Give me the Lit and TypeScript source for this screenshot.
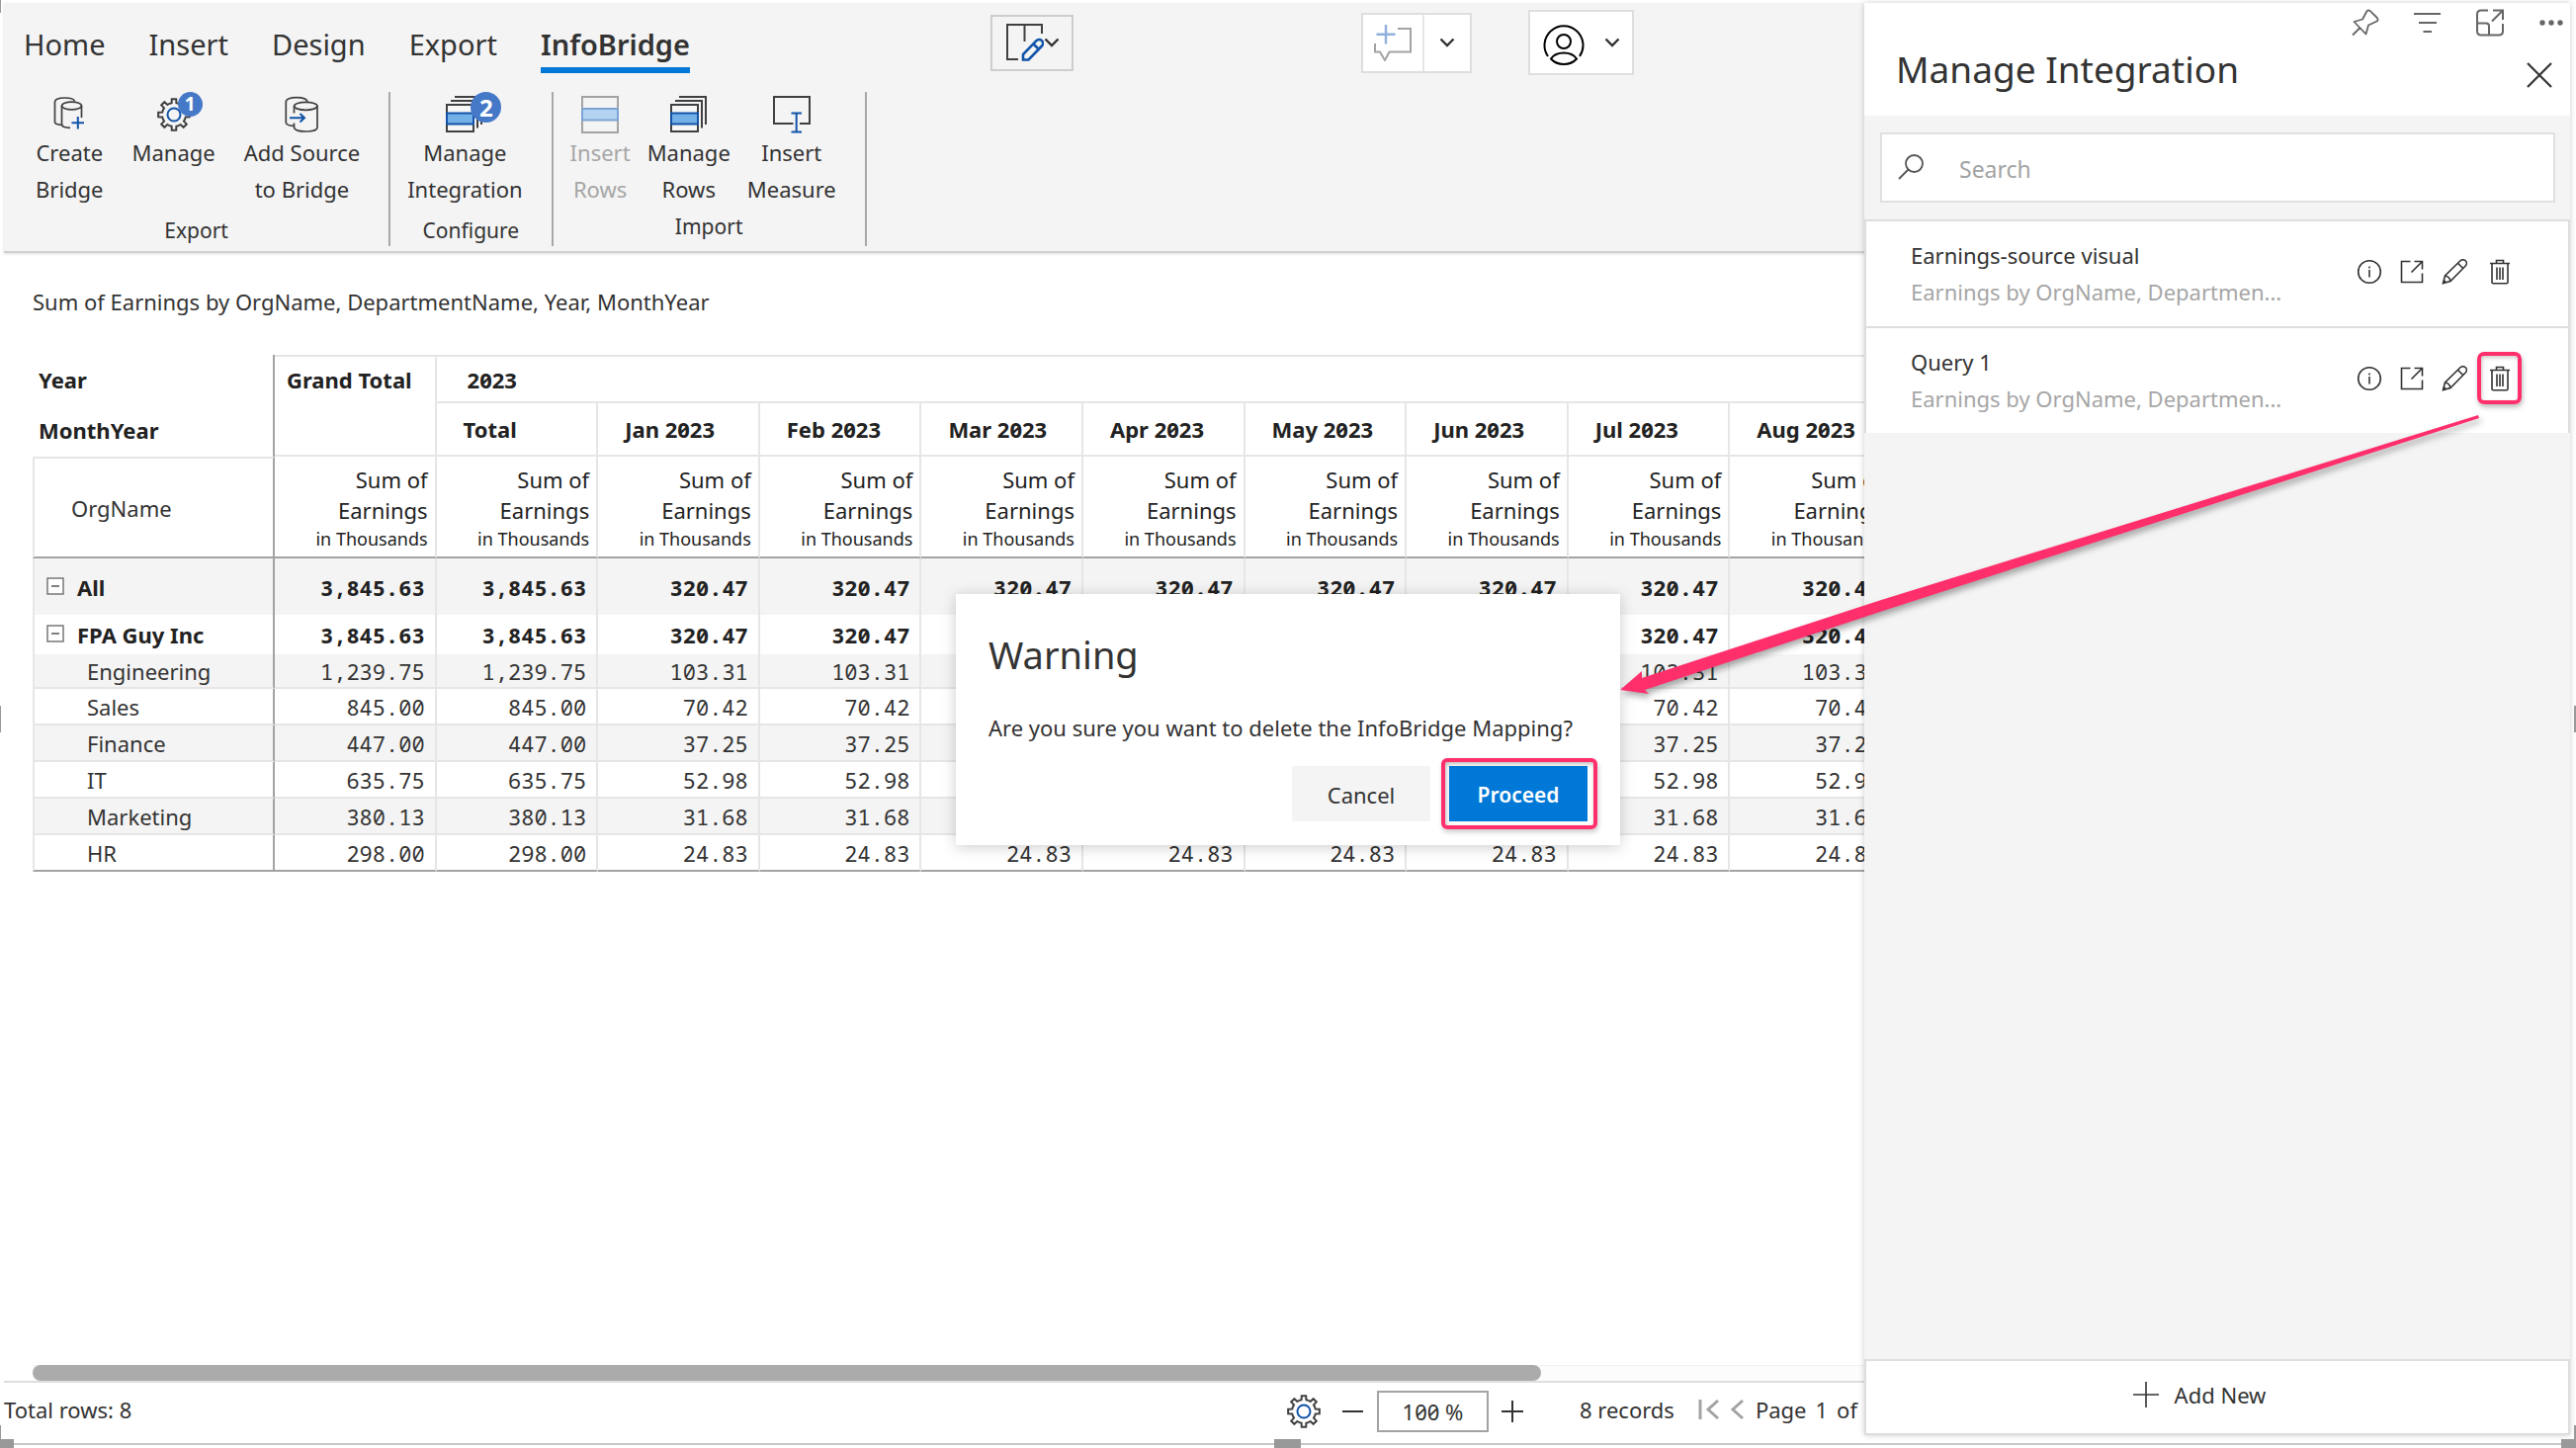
import { LitElement, html, svg, css } from 'lit';
import { customElement, property } from 'lit/decorators.js';
import { classMap } from 'lit/directives/class-map.js';

const DARK = '#404040';
const BLUE = '#1253a8';

/* Outline of an eight-toothed gear centred on (cx, cy). */
function gearPath(cx: number, cy: number, outer: number, root: number): string {
  const parts: string[] = [];
  const at = (r: number, a: number) => `${(cx + r * Math.sin(a)).toFixed(2)} ${(cy - r * Math.cos(a)).toFixed(2)}`;
  for (let i = 0; i < 8; i++) {
    const a = (i * Math.PI) / 4;
    parts.push(
      `${i ? `A${root} ${root} 0 0 1` : 'M'}${at(root, a - 0.2)}`,
      `L${at(outer, a - 0.14)}`,
      `L${at(outer, a + 0.14)}`,
      `L${at(root, a + 0.2)}`,
    );
  }
  return `${parts.join(' ')} A${root} ${root} 0 0 1 ${at(root, -0.2)} Z`;
}

const icons: Record<string, unknown> = {
  create: svg`<g fill="none" stroke=${DARK} stroke-width="1.7">
    <path d="M11 29.3C7 29 4.5 28 4.5 26.5V6C4.5 3.5 9 2 14.5 2S24 3.5 24.5 5.5"/>
    <ellipse cx="21.5" cy="10" rx="10" ry="3.8"/>
    <path d="M11.5 10V28.5C11.5 31 15 32.3 20 32.3M31.5 10V22"/></g>
    <path d="M27.8 21V33.5M21.5 27.3H34" stroke=${BLUE} stroke-width="2"/>`,
  gear: svg`<path d=${gearPath(19, 19, 16, 12)} fill="none" stroke=${DARK} stroke-width="2"/>
    <circle cx="19" cy="19" r="6.5" fill="none" stroke=${BLUE} stroke-width="2"/>`,
  source: svg`<g fill="none" stroke=${DARK} stroke-width="1.7">
    <path d="M11 30.5C6 30 3.3 29 3.3 27V6C3.3 3.2 8 1.7 14 1.7S24.5 3.2 25 6"/>
    <ellipse cx="23.3" cy="10.3" rx="11.7" ry="4"/>
    <path d="M11.5 10V17.5M11.5 27.5V32C12 34.5 17 36 23.3 36S35 34.5 35 32V10"/></g>
    <path d="M7 22.3H22M17.5 18L22 22.3L17.5 26.5" fill="none" stroke=${BLUE} stroke-width="2"/>`,
  stack: svg`<g fill="none" stroke=${DARK} stroke-width="2">
    <path d="M5 5H32V32.5M9 1H36V29"/>
    <rect x="1" y="9" width="27" height="27" fill="#f7f7f7"/></g>
    <rect x="1" y="17.5" width="27" height="11" fill="#74b0e8" stroke=${BLUE} stroke-width="2"/>`,
  rows: svg`<rect x="1" y="1" width="36" height="36" fill="none" stroke="#a3a3a3" stroke-width="2"/>
    <rect x="1" y="13" width="36" height="11.5" fill="#b3d3f0" stroke="#7da3d3" stroke-width="2"/>`,
  measure: svg`<path d="M20.5 28H1V1H37V28H27" fill="none" stroke=${DARK} stroke-width="2"/>
    <path d="M18.5 17.5H29M18.5 36.5H29M23.7 17.5V36.5" stroke=${BLUE} stroke-width="2" fill="none"/>`,
  layout: svg`<path d="M12 36H1V1H36V10M18.5 1V18" fill="none" stroke=${DARK} stroke-width="2"/>
    <path d="M17 36.5V31L30.5 17.2A3.7 3.7 0 0 1 36 22.5L22.5 36.5ZM27.5 20.5L32.5 25.5" fill="none" stroke=${BLUE} stroke-width="2.6"/>`,
  comment: svg`<path d="M1 20V28.5H6L11 37L15.5 28.5H37V5H24" fill="none" stroke="#a3a3a3" stroke-width="2"/>
    <path d="M12 1V20.5M2.5 10.7H21.5" stroke="#8fb0dc" stroke-width="2.4"/>`,
  user: svg`<g fill="none" stroke="#000" stroke-width="2"><path d="M5 33A19.5 19.5 0 1 1 37 33"/>
    <circle cx="21" cy="18" r="7"/>
    <path d="M8 35.5C11 31 15.5 29.5 21 29.5S31 31 34 35.5C30.5 39.5 26 41 21 41S11.5 39.5 8 35.5Z"/></g>`,
};

const chevron = html`<svg class="chev" width="16" height="10" viewBox="0 0 16 10">
  <path d="M1.5 1.5L8 8L14.5 1.5" fill="none" stroke="#333" stroke-width="2.4"/></svg>`;

const glyph = (name: string) =>
  html`<svg width="38" height="38" viewBox="0 0 38 38" aria-hidden="true">${icons[name]}</svg>`;

@customElement('ribbon-bar')
class RibbonBar extends LitElement {
  static styles = css`
    :host { display: block; background: #f4f4f4; border-bottom: 2px solid #d0d0d0; box-shadow: 0 1px 3px #0002; color: #333; }
    button { border: 0; background: none; padding: 0; margin: 0; font: inherit; color: inherit; }
    svg { display: block; }
    .head { display: grid; grid-template-columns: 998fr 375fr 169fr 340fr; height: 80px; align-items: center; }
    .tabs { display: flex; gap: 44px; padding: 22px 0 9px 20px; font-size: 29px; line-height: 40px; }
    .tab { border-bottom: 6px solid transparent; padding-bottom: 3px; }
    .tab.on { border-color: #0078d7; font-weight: 600; }
    .tool { display: inline-flex; align-items: center; justify-self: start; box-sizing: border-box; border: 2px solid #dedede; background: #fff; }
    .tool.layout { height: 57px; border-color: #cdcdcd; background: #f4f4f4; padding: 0 12px 0 14px; }
    .tool.comment { height: 61px; }
    .part { height: 57px; display: flex; align-items: center; justify-content: center; padding: 0 11px; }
    .part + .part { border-left: 2px solid #e6e6e6; padding: 0 15px; }
    .tool.user { height: 66px; padding: 0 12px 0 13px; gap: 20px; }
    .face { padding-top: 5px; }
    .groups { display: flex; padding: 10px 0 5px; }
    .group { box-sizing: border-box; height: 156px; padding-top: 4px; border-right: 2px solid #a8a8a8; text-align: center; }
    .items { display: flex; gap: 29px; align-items: start; padding: 0 29px 0 32px; font-size: 22px; line-height: 37px; min-height: 113px; }
    .configure .items { padding: 0 29px 0 17px; }
    .import .items { gap: 17px; padding: 0 29px 0 17px; }
    .item { display: flex; flex-direction: column; align-items: center; gap: 1px; }
    .item:disabled { color: #a6a6a6; }
    .pic { position: relative; }
    .badge { position: absolute; left: 23px; top: -4px; width: 25px; height: 25px; border-radius: 50%; background: #4678c8; color: #fff; font-weight: 700; font-size: 19px; line-height: 25px; text-align: center; }
    .badge.big { left: 25px; width: 31px; height: 31px; font-size: 24px; line-height: 31px; }
    .name { font-size: 21px; line-height: 30px; margin-top: 8px; }
    .import .name { margin-top: 4px; }
  `;

  private item(icon: string, lines: string[], badge = '', off = false) {
    return html`<button class="item" ?disabled=${off}>
      <span class="pic">${glyph(icon)}${badge
        ? html`<span class=${classMap({ badge: true, big: badge === '2' })}>${badge}</span>` : ''}</span>
      <span>${lines.map((l, i) => html`${i ? html`<br>` : ''}${l}`)}</span>
    </button>`;
  }

  render() {
    return html`
      <div class="head">
        <nav class="tabs">${['Home', 'Insert', 'Design', 'Export', 'InfoBridge'].map(
          (t) => html`<button class=${classMap({ tab: true, on: t === 'InfoBridge' })}>${t}</button>`)}</nav>
        <button class="tool layout" aria-label="Layout">${glyph('layout')}${chevron}</button>
        <div class="tool comment">
          <button class="part" aria-label="Add comment" disabled>${glyph('comment')}</button>
          <button class="part" aria-label="Comment options">${chevron}</button>
        </div>
        <button class="tool user" aria-label="Account">
          <svg class="face" width="42" height="43" viewBox="0 0 42 43">${icons.user}</svg>${chevron}
        </button>
      </div>
      <div class="groups">
        <section class="group">
          <div class="items">
            ${this.item('create', ['Create', 'Bridge'])}
            ${this.item('gear', ['Manage'], '1')}
            ${this.item('source', ['Add Source', 'to Bridge'])}
          </div>
          <div class="name">Export</div>
        </section>
        <section class="group configure">
          <div class="items">${this.item('stack', ['Manage', 'Integration'], '2')}</div>
          <div class="name">Configure</div>
        </section>
        <section class="group import">
          <div class="items">
            ${this.item('rows', ['Insert', 'Rows'], '', true)}
            ${this.item('stack', ['Manage', 'Rows'])}
            ${this.item('measure', ['Insert', 'Measure'])}
          </div>
          <div class="name">Import</div>
        </section>
      </div>`;
  }
}

interface Row { name: string; total: string; month: string; kind: string; }

const rows: Row[] = [
  { name: 'All', total: '3,845.63', month: '320.47', kind: 'all' },
  { name: 'FPA Guy Inc', total: '3,845.63', month: '320.47', kind: 'company' },
  { name: 'Engineering', total: '1,239.75', month: '103.31', kind: 'dept first' },
  { name: 'Sales', total: '845.00', month: '70.42', kind: 'dept' },
  { name: 'Finance', total: '447.00', month: '37.25', kind: 'dept' },
  { name: 'IT', total: '635.75', month: '52.98', kind: 'dept' },
  { name: 'Marketing', total: '380.13', month: '31.68', kind: 'dept' },
  { name: 'HR', total: '298.00', month: '24.83', kind: 'dept last' },
];
const months = ['Jan', 'Feb', 'Mar', 'Apr', 'May', 'Jun', 'Jul', 'Aug'];

@customElement('earnings-matrix')
class EarningsMatrix extends LitElement {
  static styles = css`
    :host { display: block; overflow: hidden; color: #222; font-size: 22px; line-height: 30px; }
    table { table-layout: fixed; width: 1881px; border-collapse: separate; border-spacing: 0; }
    .c0 { width: 245px; }
    th, td { box-sizing: border-box; padding: 0; border: 0 solid #e6e6e6; vertical-align: middle; white-space: nowrap; }
    th { text-align: left; font-feature-settings: 'zero'; }
    .y th { height: 49px; }
    .m th { height: 54px; }
    .s th { height: 103px; font-weight: 400; border-bottom: 2px solid #a3a3a3; }
    .corner { padding-left: 6px; border-right: 2px solid #a3a3a3; }
    .grand { vertical-align: top; border-width: 2px 2px 2px 0; padding: 8px 0 0 12px; }
    .year { border-width: 2px 2px 2px 0; padding-left: 31px; }
    .month { border-width: 0 2px 2px 0; padding-left: 27px; }
    .s .org { padding-left: 37px; border-top-width: 2px; border-left-width: 2px; border-right: 2px solid #a3a3a3; color: #333; }
    .s .measure { text-align: right; line-height: 31px; padding: 4px 7px 0 0; border-right-width: 2px; }
    .unit { display: block; font-size: 18px; line-height: 27px; }
    .name { text-align: left; font-weight: inherit; border-left-width: 2px; border-right: 2px solid #a3a3a3; }
    td { font-family: 'Noto Sans Mono', 'DejaVu Sans Mono', monospace; text-align: right; padding-right: 10px; border-right-width: 2px; }
    .all td { height: 57px; }
    .company td { height: 40px; }
    .dept td { height: 37px; }
    .first td { height: 35px; }
    .all, .company { font-weight: 700; }
    .dept { color: #333; font-weight: 400; }
    .dept .name { padding-left: 53px; }
    .dept > * { border-bottom-width: 2px; }
    .last > * { border-bottom: 2px solid #a3a3a3; }
    tbody tr:nth-child(odd) { background: #f4f4f4; }
    .node { display: flex; align-items: center; gap: 13px; padding-left: 12px; }
    .toggle { border: 0; background: none; padding: 0; margin: 0; display: block; }
    .toggle svg { display: block; }
  `;

  private label(r: Row) {
    if (r.kind.startsWith('dept')) return r.name;
    return html`<span class="node"><button class="toggle" aria-label="Collapse">
      <svg width="18" height="22" viewBox="0 0 18 22"><rect x="1" y="2" width="16" height="16" fill="#fff" stroke="#777" stroke-width="1.5"/>
      <path d="M5 10H13" stroke="#555" stroke-width="1.5"/></svg></button>${r.name}</span>`;
  }

  render() {
    const cols = months.length + 2;
    return html`<table>
      <colgroup><col class="c0">${Array.from({ length: cols }, () => html`<col>`)}</colgroup>
      <thead>
        <tr class="y"><th class="corner">Year</th><th class="grand" rowspan="2">Grand Total</th><th class="year" colspan=${cols - 1}>2023</th></tr>
        <tr class="m"><th class="corner">MonthYear</th><th class="month">Total</th>${months.map((m) => html`<th class="month">${m} 2023</th>`)}</tr>
        <tr class="s"><th class="org">OrgName</th>${Array.from({ length: cols }, () =>
          html`<th class="measure">Sum of<br>Earnings<span class="unit">in Thousands</span></th>`)}</tr>
      </thead>
      <tbody>${rows.map((r) => html`<tr class=${r.kind}><th class="name" scope="row">${this.label(r)}</th>
        <td>${r.total}</td><td>${r.total}</td>${months.map(() => html`<td>${r.month}</td>`)}</tr>`)}</tbody>
    </table>`;
  }
}

@customElement('status-bar')
class StatusBar extends LitElement {
  static styles = css`
    :host { display: block; color: #333; font-size: 22px; }
    button { border: 0; background: none; padding: 0; margin: 0; font: inherit; color: inherit; display: block; }
    svg { display: block; }
    .track { display: grid; grid-template-columns: 28fr 6fr; height: 16px; margin-left: 29px; background: #fcfcfc; box-shadow: inset 0 1px #f0f0f0; }
    .thumb { border-radius: 8px; background: #ababab; }
    .bar { display: flex; align-items: center; height: 59px; border-top: 2px solid #dedede; box-sizing: border-box; padding: 1px 7px 0 0; }
    .rows { flex: 1; padding-bottom: 5px; }
    .zoom { display: flex; align-items: center; gap: 13px; margin-right: 57px; }
    .gear { margin-right: 7px; }
    input { box-sizing: border-box; width: 113px; height: 42px; border: 2px solid #a3a3a3; background: #fff; font: inherit; color: inherit; text-align: center; font-feature-settings: 'zero'; padding: 0; margin: 0; }
    .pager { display: flex; align-items: center; gap: 12px; padding-bottom: 5px; }
    .records { margin-right: 12px; }
    .page { display: flex; gap: 9px; }
  `;

  render() {
    return html`
      <div class="track"><div class="thumb"></div></div>
      <div class="bar">
        <span class="rows">Total rows: 8</span>
        <div class="zoom">
          <button class="gear" aria-label="Settings">${glyph('gear')}</button>
          <button aria-label="Zoom out"><svg width="22" height="22"><path d="M0 11H21" stroke="#333" stroke-width="2"/></svg></button>
          <input aria-label="Zoom level" value="100 %">
          <button aria-label="Zoom in"><svg width="22" height="22"><path d="M0 11H22M11 0V22" stroke="#333" stroke-width="2"/></svg></button>
        </div>
        <div class="pager">
          <span class="records">8 records</span>
          <button aria-label="First page"><svg width="21" height="22"><path d="M2 1V21M20 2L10 11L20 20" fill="none" stroke="#a3a3a3" stroke-width="3"/></svg></button>
          <button aria-label="Previous page"><svg width="13" height="22"><path d="M12 2L2 11L12 20" fill="none" stroke="#a3a3a3" stroke-width="3"/></svg></button>
          <span class="page"><span>Page</span><span>1</span><span>of</span></span>
        </div>
      </div>`;
  }
}

const line = (w: number, h: number, body: unknown) =>
  html`<svg width=${w} height=${h} viewBox="0 0 ${w} ${h}" fill="none" stroke="#333" stroke-width="1.6">${body}</svg>`;

const infoIcon = line(26, 26, svg`<circle cx="13" cy="13" r="11.3"/><path d="M13 11V18.5M13 7.5V9.5"/>`);
const openIcon = line(24, 24, svg`<path d="M10.5 1.5H1.5V22.5H22.5V13.5M14.5 1.5H22.5V9.5M22.5 1.5L11.5 12.5"/>`);
const pencilIcon = line(26, 26, svg`<path d="M1.5 24.5L3.5 17L19 1.8A3.5 3.5 0 0 1 24.2 7L9 22.5ZM3.5 17C6.5 17.5 8.5 19.5 9 22.5M16.5 4.3L21.7 9.5M1.5 24.5L4 22"/>`);
const trashIcon = line(22, 26, svg`<path d="M1 4.5H21M7.5 4.5V1.5H14.5V4.5M3 4.5V23.5Q3 24.8 4.3 24.8H17.7Q19 24.8 19 23.5V4.5M8 8.5V21M11 8.5V21M14 8.5V21"/>`);

@customElement('integration-panel')
class IntegrationPanel extends LitElement {
  static styles = css`
    :host { display: flex; flex-direction: column; background: #f4f4f4; color: #333; font-size: 22px; position: relative; box-shadow: 0 0 6px #0003; }
    button { border: 0; background: none; padding: 0; margin: 0; font: inherit; color: inherit; display: block; }
    svg { display: block; }
    header { background: #fff; height: 114px; box-sizing: border-box; }
    .host { display: flex; justify-content: flex-end; align-items: center; gap: 35px; height: 40px; padding-right: 6px; }
    .title { display: flex; justify-content: space-between; align-items: end; padding: 2px 18px 0 32px; }
    .close { padding-bottom: 6px; }
    h1 { margin: 0; font-weight: 400; font-size: 37px; line-height: 50px; }
    .search { display: flex; align-items: center; margin: 17px 15px 17px 16px; height: 71px; box-sizing: border-box; border: 2px solid #e0e0e0; background: #fff; padding: 2px 0 0 16px; gap: 36px; }
    .lens { margin-bottom: 3px; }
    input { flex: 1; border: 0; padding: 0; font: inherit; font-size: 23px; color: inherit; background: none; outline: 0; }
    input::placeholder { color: #a3a3a3; opacity: 1; }
    ul { list-style: none; margin: 0; padding: 0; }
    li { display: flex; align-items: center; justify-content: space-between; box-sizing: border-box; height: 108px; background: #fff; border: 2px solid #dedede; border-bottom: 0; padding: 0 58px 0 45px; line-height: 37px; }
    .name { display: block; }
    .sub { color: #a6a6a6; }
    .acts { display: flex; align-items: center; gap: 18px; padding-bottom: 4px; }
    .del { margin-left: 4px; position: relative; }
    .mark::after { content: ''; position: absolute; inset: -14px -11px -13px -12px; border: 4px solid #ff2f6c; border-radius: 7px; box-shadow: 1px 3px 5px #0004, inset 1px 2px 4px #0003; }
    .add { margin-top: auto; display: flex; align-items: center; justify-content: center; gap: 16px; border: 2px solid #dedede; background: #fff; padding: 0 36px 6px 0; height: 77px; box-sizing: border-box; }
  `;

  render() {
    return html`
      <header>
        <div class="host">
          <button aria-label="Pin"><svg width="28" height="28" fill="none" stroke="#666" stroke-width="1.8"><path d="M15.5 2.2Q17 .5 18.800 2.200L25.800 9Q27.500 11 25.500 12.500L17 16.500L14.500 25.500L2.500 13L11 10.500ZM8.500 19L1 26.500" stroke-linejoin="round"/></svg></button>
          <button aria-label="Filter"><svg width="28" height="22" stroke="#666" stroke-width="2"><path d="M0 2H27M5 11H23M9.5 20H18"/></svg></button>
          <button aria-label="Focus mode"><svg width="28" height="28" fill="none" stroke="#666" stroke-width="2"><path d="M12 1.5H5Q1 1.5 1 5.5V22.5Q1 26.5 5 26.5H23Q27 26.5 27 22.5V15M1 14.5H10Q13 14.5 13 17.5V26.5M16 12.5L27 1.5M17 1.5H27V11"/></svg></button>
          <button aria-label="More options"><svg width="26" height="8" fill="#666"><circle cx="4" cy="4" r="2.7"/><circle cx="13" cy="4" r="2.7"/><circle cx="22" cy="4" r="2.7"/></svg></button>
        </div>
        <div class="title"><h1>Manage Integration</h1>
          <button class="close" aria-label="Close"><svg width="26" height="26" stroke="#333" stroke-width="2.2"><path d="M1 1L25 25M25 1L1 25"/></svg></button></div>
      </header>
      <label class="search"><svg class="lens" width="26" height="26" fill="none" stroke="#555" stroke-width="1.8"><circle cx="16.5" cy="9.5" r="8.5"/><path d="M10.5 15.5L1 25"/></svg>
        <input type="search" placeholder="Search" aria-label="Search"></label>
      <ul>${['Earnings-source visual', 'Query 1'].map((n, i) => html`<li>
        <div><span class="name">${n}</span><span class="sub">Earnings by OrgName, Departmen...</span></div>
        <div class="acts">
          <button aria-label="Details">${infoIcon}</button>
          <button aria-label="Open">${openIcon}</button>
          <button aria-label="Edit">${pencilIcon}</button>
          <button class=${classMap({ del: true, mark: i === 1 })} aria-label="Delete">${trashIcon}</button>
        </div></li>`)}</ul>
      <button class="add"><svg width="26" height="26" stroke="#333" stroke-width="1.6"><path d="M0 13H26M13 0V26"/></svg>Add New</button>`;
  }
}

@customElement('confirm-dialog')
class ConfirmDialog extends LitElement {
  @property() heading = '';
  @property() message = '';

  static styles = css`
    :host { display: block; box-sizing: border-box; width: 672px; background: #fff; color: #333; padding: 35px 33px 24px; box-shadow: 0 2px 14px #0003; font-size: 22px; line-height: 30px; }
    h2 { margin: 0 0 33px; font-weight: 400; font-size: 38px; line-height: 52px; }
    p { margin: 0 0 24px; white-space: nowrap; }
    .acts { display: flex; justify-content: flex-end; gap: 19px; }
    button { width: 140px; height: 56px; border: 0; padding: 2px 0 0; font: inherit; color: inherit; background: #f4f4f4; position: relative; }
    .primary { background: #0078d7; color: #fff; font-weight: 600; font-size: 21px; }
    .primary::after { content: ''; position: absolute; inset: -8px -10px -8px -8px; border: 4px solid #ff2f6c; border-radius: 6px; box-shadow: 1px 3px 5px #0003, inset 1px 2px 4px #0004; }
  `;

  render() {
    return html`<h2>${this.heading}</h2><p>${this.message}</p>
      <div class="acts"><button>Cancel</button><button class="primary">Proceed</button></div>`;
  }
}

@customElement('app-root')
class AppRoot extends LitElement {
  static styles = css`
    :host { display: block; position: relative; height: 100vh; overflow: hidden; background: #fff; box-sizing: border-box; font-family: 'Noto Sans', 'Open Sans', sans-serif; color: #333; }
    .page { height: 100%; box-sizing: border-box; display: grid; grid-template-columns: minmax(0, 1fr) 714px; padding: 3px 6px 9px 4px; }
    .main { display: flex; flex-direction: column; min-width: 0; }
    .caption { margin: 34px 0 39px 29px; font-size: 22px; line-height: 30px; font-weight: 400; }
    earnings-matrix { margin-left: 29px; flex: 1; }
    integration-panel { margin-bottom: 4px; }
    .overlay { position: absolute; inset: 0 0 10px; display: flex; align-items: center; justify-content: center; pointer-events: none; }
    confirm-dialog { pointer-events: auto; }
    .arrow { position: absolute; left: 1630px; top: 410px; filter: drop-shadow(2px 4px 3px #0005); pointer-events: none; }
    .base { position: absolute; left: 0; right: 0; bottom: 3px; height: 2px; background: #c8c8c8; }
    .grip { position: absolute; background: #999; }
    .bl { left: 0; bottom: 0; width: 14px; height: 9px; }
    .bc { left: calc(50% - 14px); bottom: 0; width: 27px; height: 9px; }
    .br { right: 0; bottom: 0; width: 15px; height: 9px; }
    .tl { left: 0; top: 0; width: 1px; height: 13px; }
    .ml { left: 0; top: 714px; width: 1px; height: 27px; }
    .mr { right: 0; top: 714px; width: 2px; height: 27px; }
    .ll { left: 0; bottom: 9px; width: 1px; height: 14px; }
    .lr { right: 0; bottom: 9px; width: 2px; height: 14px; }
  `;

  render() {
    return html`
      <div class="page">
        <main class="main">
          <ribbon-bar></ribbon-bar>
          <h2 class="caption">Sum of Earnings by OrgName, DepartmentName, Year, MonthYear</h2>
          <earnings-matrix></earnings-matrix>
          <status-bar></status-bar>
        </main>
        <integration-panel></integration-panel>
      </div>
      <div class="overlay"><confirm-dialog heading="Warning" message="Are you sure you want to delete the InfoBridge Mapping?"></confirm-dialog></div>
      <svg class="arrow" width="890" height="300" viewBox="0 0 890 300" aria-hidden="true">
        <path d="M9 288L31 269L31 276L270 198L877 10L878 13L272 209L34 288L38 292Z" fill="#ff2f6c"/>
      </svg>
      <div class="base"></div>
      ${['bl', 'bc', 'br', 'tl', 'ml', 'mr', 'll', 'lr'].map((g) => html`<div class="grip ${g}"></div>`)}`;
  }
}
